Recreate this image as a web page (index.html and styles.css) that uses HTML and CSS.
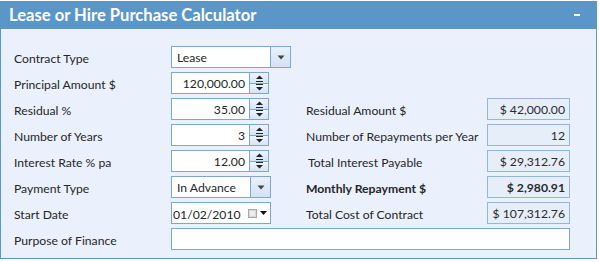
FILE: index.html
```html
<!DOCTYPE html>
<html>
<head>
<meta charset="utf-8">
<link rel="stylesheet" href="styles.css">
</head>
<body>
<div class="panel">
  <div class="head">
    <span class="title">Lease or Hire Purchase Calculator</span>
    <span class="minus"></span>
  </div>
  <div class="body">
    <div class="row">
      <span class="lbl">Contract Type</span>
      <div class="ctl">
        <div class="select wide"><span class="val">Lease</span><span class="ddbtn"><svg width="8" height="5" viewBox="0 0 8 5"><path d="M0.5 0.5h7l-3.5 4z" fill="#444"/></svg></span></div>
      </div>
    </div>
    <div class="row">
      <span class="lbl">Principal Amount $</span>
      <div class="ctl">
        <div class="spin"><span class="num">120,000.00</span></div>
        <div class="spinbtns">
          <span class="sb up"><svg width="9" height="8" viewBox="0 0 9 8"><path d="M1 5h7L4.5 1.5z" fill="#222"/><path d="M1 7.5h7" stroke="#222"/></svg></span>
          <span class="sb dn"><svg width="9" height="8" viewBox="0 0 9 8"><path d="M1 0.5h7" stroke="#222"/><path d="M1 3h7L4.5 6.5z" fill="#222"/></svg></span>
        </div>
      </div>
    </div>
    <div class="row">
      <span class="lbl">Residual %</span>
      <div class="ctl">
        <div class="spin"><span class="num">35.00</span></div>
        <div class="spinbtns">
          <span class="sb up"><svg width="9" height="8" viewBox="0 0 9 8"><path d="M1 5h7L4.5 1.5z" fill="#222"/><path d="M1 7.5h7" stroke="#222"/></svg></span>
          <span class="sb dn"><svg width="9" height="8" viewBox="0 0 9 8"><path d="M1 0.5h7" stroke="#222"/><path d="M1 3h7L4.5 6.5z" fill="#222"/></svg></span>
        </div>
      </div>
      <span class="rlbl">Residual Amount $</span>
      <div class="ro">$ 42,000.00</div>
    </div>
    <div class="row">
      <span class="lbl">Number of Years</span>
      <div class="ctl">
        <div class="spin"><span class="num">3</span></div>
        <div class="spinbtns">
          <span class="sb up"><svg width="9" height="8" viewBox="0 0 9 8"><path d="M1 5h7L4.5 1.5z" fill="#222"/><path d="M1 7.5h7" stroke="#222"/></svg></span>
          <span class="sb dn"><svg width="9" height="8" viewBox="0 0 9 8"><path d="M1 0.5h7" stroke="#222"/><path d="M1 3h7L4.5 6.5z" fill="#222"/></svg></span>
        </div>
      </div>
      <span class="rlbl">Number of Repayments per Year</span>
      <div class="ro">12</div>
    </div>
    <div class="row">
      <span class="lbl">Interest Rate % pa</span>
      <div class="ctl">
        <div class="spin"><span class="num">12.00</span></div>
        <div class="spinbtns">
          <span class="sb up"><svg width="9" height="8" viewBox="0 0 9 8"><path d="M1 5h7L4.5 1.5z" fill="#222"/><path d="M1 7.5h7" stroke="#222"/></svg></span>
          <span class="sb dn"><svg width="9" height="8" viewBox="0 0 9 8"><path d="M1 0.5h7" stroke="#222"/><path d="M1 3h7L4.5 6.5z" fill="#222"/></svg></span>
        </div>
      </div>
      <span class="rlbl ind">Total Interest Payable</span>
      <div class="ro">$ 29,312.76</div>
    </div>
    <div class="row">
      <span class="lbl">Payment Type</span>
      <div class="ctl">
        <div class="select narrow"><span class="val">In Advance</span><span class="ddbtn"><svg width="8" height="5" viewBox="0 0 8 5"><path d="M0.5 0.5h7l-3.5 4z" fill="#444"/></svg></span></div>
      </div>
      <span class="rlbl bold">Monthly Repayment $</span>
      <div class="ro bold">$ 2,980.91</div>
    </div>
    <div class="row">
      <span class="lbl">Start Date</span>
      <div class="ctl">
        <div class="date"><span class="dval">01/02/2010</span>
          <svg class="cal" width="9" height="9" viewBox="0 0 9 9"><rect x="0.5" y="0.5" width="8" height="8" fill="#d8d8d8" stroke="#a8a8a8"/><rect x="2" y="2" width="5" height="5" fill="#ececec"/></svg>
          <svg class="dd" width="7" height="4" viewBox="0 0 7 4"><path d="M0 0h7L3.5 4z" fill="#111"/></svg>
        </div>
      </div>
      <span class="rlbl">Total Cost of Contract</span>
      <div class="ro">$ 107,312.76</div>
    </div>
    <div class="row">
      <span class="lbl">Purpose of Finance</span>
      <div class="text"></div>
    </div>
  </div>
</div>
</body>
</html>
```

FILE: styles.css
```css
html, body {
  margin: 0;
  padding: 0;
  background: #ffffff;
}
body {
  font-family: "Lato", "Open Sans", sans-serif;
  font-size: 12.2px;
  color: #262626;
}
.panel {
  width: 597px;
  margin-top: 1px;
}
.head {
  height: 28px;
  background: #5b96c9;
  display: flex;
  align-items: center;
  justify-content: space-between;
  padding: 0 17px 0 9px;
  box-sizing: border-box;
}
.title {
  color: #ffffff;
  font-weight: 700;
  font-size: 16.6px;
}
.minus {
  width: 6px;
  height: 2px;
  background: #ffffff;
}
.body {
  background: #eaf1fd;
  border-left: 1px solid #5b96c9;
  border-right: 1px solid #5b96c9;
  border-bottom: 1px solid #5b96c9;
  padding: 17px 0 8px 13px;
  display: flex;
  flex-direction: column;
  gap: 4px;
}
.row {
  display: flex;
  align-items: center;
  height: 22px;
}
.lbl {
  width: 157px;
  flex: none;
  padding-top: 3px;
}
.ctl {
  width: 135px;
  flex: none;
  display: flex;
  height: 22px;
}
.rlbl {
  width: 181px;
  flex: none;
  padding-top: 3px;
}
.rlbl.ind { padding-left: 2px; width: 179px; }
.bold { font-weight: 700; }
.ro {
  width: 83px;
  height: 22px;
  box-sizing: border-box;
  border: 1px solid #93b5df;
  background: #e6eefa;
  text-align: right;
  padding: 2px 4px 0 0;
  line-height: 17px;
  color: #2a2a2a;
}
.select {
  height: 22px;
  box-sizing: border-box;
  border: 1px solid #7ea5d6;
  background: #ffffff;
  display: flex;
}
.select.wide { width: 120px; }
.select.narrow { width: 100px; }
.val {
  flex: 1;
  padding: 2px 0 0 5px;
  line-height: 17px;
}
.ddbtn {
  width: 19px;
  border-left: 1px solid #7ea5d6;
  background: linear-gradient(#e9f1fb, #d3e2f4);
  display: flex;
  align-items: center;
  justify-content: center;
}
.spin {
  width: 79px;
  height: 22px;
  box-sizing: border-box;
  border: 1px solid #7ea5d6;
  background: #ffffff;
  text-align: right;
  padding: 2px 4px 0 0;
  line-height: 17px;
}
.spinbtns {
  width: 19px;
  height: 22px;
  box-sizing: border-box;
  border: 1px solid #7ea5d6;
  border-left: none;
  display: flex;
  flex-direction: column;
}
.sb {
  flex: 1;
  display: flex;
  align-items: center;
  justify-content: center;
  background: linear-gradient(#eef4fc, #d6e4f5);
}
.sb.up { border-bottom: 1px solid #7ea5d6; }
.date {
  width: 100px;
  height: 22px;
  box-sizing: border-box;
  border: 1px solid #7ea5d6;
  background: #ffffff;
  display: flex;
  align-items: center;
}
.dval {
  padding: 2px 0 0 1px;
  line-height: 17px;
  width: 75px;
}
.cal { margin-right: 3px; }
.text {
  width: 399px;
  height: 22px;
  box-sizing: border-box;
  border: 1px solid #7ea5d6;
  background: #ffffff;
}
```
